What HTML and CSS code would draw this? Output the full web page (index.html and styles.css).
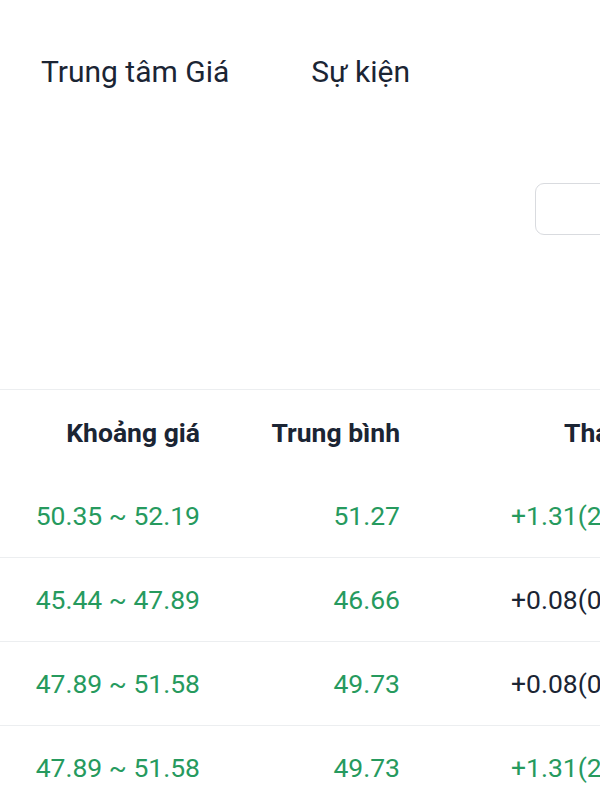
FILE: index.html
```html
<!DOCTYPE html>
<html lang="vi">
<head>
<meta charset="utf-8">
<link rel="stylesheet" href="styles.css">
</head>
<body>
<div class="page">
  <nav class="tabs">
    <span class="tab tab-first">Trung tâm Giá</span>
    <span class="tab">Sự kiện</span>
  </nav>
  <div class="toolbar">
    <div class="select-box"></div>
  </div>
  <div class="table">
    <div class="row head">
      <div class="c1">Khoảng giá</div>
      <div class="c2">Trung bình</div>
      <div class="c3">Thay đổi</div>
    </div>
    <div class="row">
      <div class="c1 up">50.35 ~ 52.19</div>
      <div class="c2 up">51.27</div>
      <div class="c3 up">+1.31(2.62%)</div>
    </div>
    <div class="row">
      <div class="c1 up">45.44 ~ 47.89</div>
      <div class="c2 up">46.66</div>
      <div class="c3">+0.08(0.17%)</div>
    </div>
    <div class="row">
      <div class="c1 up">47.89 ~ 51.58</div>
      <div class="c2 up">49.73</div>
      <div class="c3">+0.08(0.16%)</div>
    </div>
    <div class="row">
      <div class="c1 up">47.89 ~ 51.58</div>
      <div class="c2 up">49.73</div>
      <div class="c3 up">+1.31(2.70%)</div>
    </div>
  </div>
</div>
</body>
</html>
```
FILE: styles.css
```css
html, body {
  margin: 0;
  padding: 0;
  background: #ffffff;
  overflow: hidden;
}
body {
  width: 600px;
  height: 800px;
  font-family: Roboto, "Noto Sans", sans-serif;
  color: #1b2534;
}
.page {
  width: 600px;
  overflow: hidden;
}
.tabs {
  display: flex;
  height: 146px;
  padding-top: 52px;
  box-sizing: border-box;
  padding-left: 41px;
}
.tab {
  font-size: 30px;
  line-height: 40px;
  white-space: nowrap;
}
.tab-first {
  margin-right: 82px;
}
.toolbar {
  height: 243px;
  padding-top: 37px;
  box-sizing: border-box;
  display: flex;
  justify-content: flex-end;
  margin-right: -37px;
}
.select-box {
  width: 100px;
  height: 50px;
  border: 1px solid #d9dbdf;
  border-radius: 9px;
}
.table {
  border-top: 1px solid #eceef0;
}
.row {
  display: grid;
  grid-template-columns: 200px 200px 300px;
  align-items: center;
  height: 83px;
  border-bottom: 1px solid #eceef0;
  white-space: nowrap;
  font-size: 26.5px;
}
.row.head {
  height: 84px;
  border-bottom: none;
  font-weight: 700;
  font-size: 26.5px;
}
.row:last-child {
  border-bottom: none;
}
.c1, .c2 {
  text-align: right;
}
.c3 {
  padding-left: 111px;
}
.head .c3 {
  padding-left: 164px;
}
.up {
  color: #269a5e;
}
```
